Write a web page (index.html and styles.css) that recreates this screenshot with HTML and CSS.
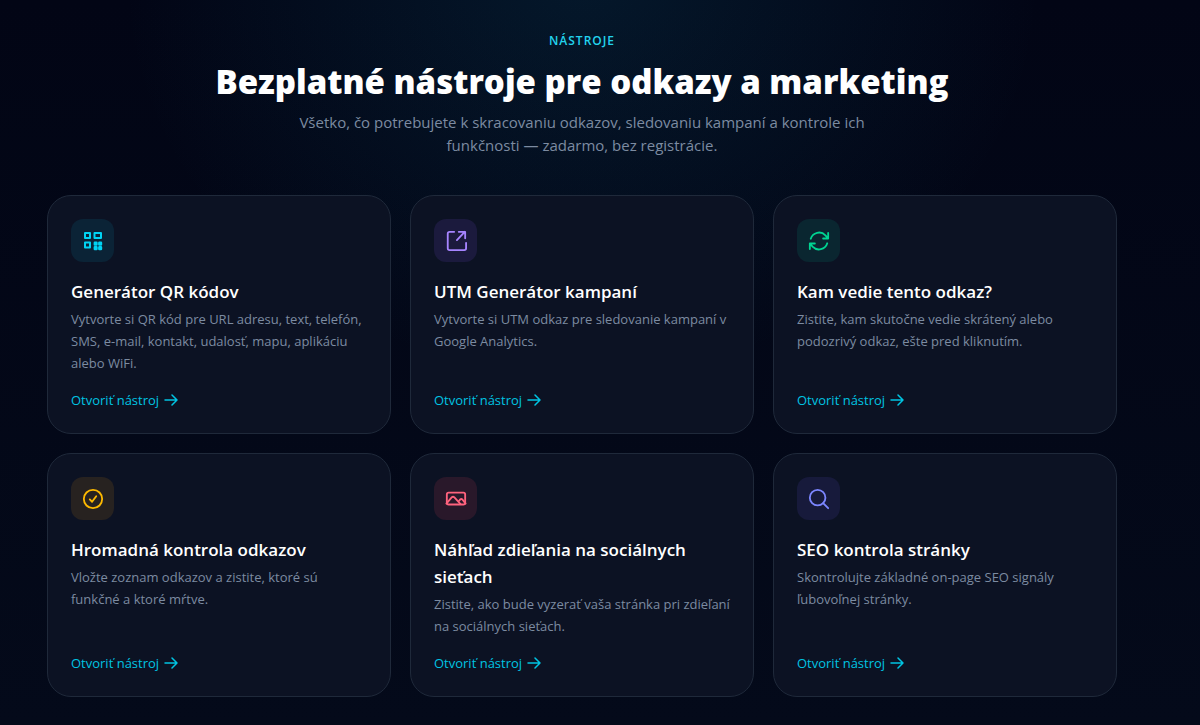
FILE: index.html
```html
<!DOCTYPE html>
<html lang="sk">
<head>
<meta charset="utf-8">
<title>Bezplatné nástroje pre odkazy a marketing</title>
<meta name="viewport" content="width=device-width, initial-scale=1">
<link rel="stylesheet" href="styles.css">
</head>
<body>
<main class="tools">
  <header class="intro">
    <p class="eyebrow">NÁSTROJE</p>
    <h1 class="heading">Bezplatné nástroje pre odkazy a marketing</h1>
    <p class="lead">Všetko, čo potrebujete k skracovaniu odkazov, sledovaniu kampaní a kontrole ich funkčnosti — zadarmo, bez registrácie.</p>
  </header>
  <div class="grid">
    <article class="card">
      <span class="badge cyan"><svg class="icon" viewBox="0 0 22 22"><path d="M3 3h5v5H3zM12.500 3h6.500v5h-6.500zM3 12.500h5v5H3z"/><path d="M12.800 12.800h1.700v1.700h-1.700zM17.300 12.800H19v1.700h-1.700zM12.800 17.300h1.700V19h-1.700zM17.300 17.300H19V19h-1.700z" stroke-width="2.400"/></svg></span>
      <h2 class="title">Generátor QR kódov</h2>
      <p class="text">Vytvorte si QR kód pre URL adresu, text, telefón, SMS, e-mail, kontakt, udalosť, mapu, aplikáciu alebo WiFi.</p>
      <a class="link" href="#qr">Otvoriť nástroj <svg class="arrow" viewBox="0 0 14 14"><path d="M1 7h12M8 2l5 5-5 5"/></svg></a>
    </article>
    <article class="card">
      <span class="badge violet"><svg class="icon" viewBox="0 0 24 24"><path d="M10 2H5a2 2 0 0 0-2 2v16a2 2 0 0 0 2 2h16a2 2 0 0 0 2-2v-6M13 11l8.500-9M15 2h7v7"/></svg></span>
      <h2 class="title">UTM Generátor kampaní</h2>
      <p class="text">Vytvorte si UTM odkaz pre sledovanie kampaní v Google Analytics.</p>
      <a class="link" href="#utm">Otvoriť nástroj <svg class="arrow" viewBox="0 0 14 14"><path d="M1 7h12M8 2l5 5-5 5"/></svg></a>
    </article>
    <article class="card">
      <span class="badge green"><svg class="icon" viewBox="0 0 24 24"><path d="M16.500 9.300h5.500v-6M7.500 14.700H2v6M3 9.500a9.500 9.500 0 0 1 16-3.700l3 3.500M21 14.500a9.500 9.500 0 0 1-16 3.700l-3-3.500"/></svg></span>
      <h2 class="title">Kam vedie tento odkaz?</h2>
      <p class="text">Zistite, kam skutočne vedie skrátený alebo podozrivý odkaz, ešte pred kliknutím.</p>
      <a class="link" href="#redirect">Otvoriť nástroj <svg class="arrow" viewBox="0 0 14 14"><path d="M1 7h12M8 2l5 5-5 5"/></svg></a>
    </article>
    <article class="card">
      <span class="badge amber"><svg class="icon" viewBox="0 0 24 24"><circle cx="12" cy="12" r="10"/><path d="M8.500 12.500l2.500 2.500 4.500-6"/></svg></span>
      <h2 class="title">Hromadná kontrola odkazov</h2>
      <p class="text">Vložte zoznam odkazov a zistite, ktoré sú funkčné a ktoré mŕtve.</p>
      <a class="link" href="#bulk">Otvoriť nástroj <svg class="arrow" viewBox="0 0 14 14"><path d="M1 7h12M8 2l5 5-5 5"/></svg></a>
    </article>
    <article class="card">
      <span class="badge rose"><svg class="icon" viewBox="0 0 24 24"><rect x="2" y="5" width="20" height="13" rx="2"/><path d="M1.500 17l6-7a2 2 0 0 1 2.500 0l7 7.500M15.500 14l1-1.500a2 2 0 0 1 2.500 0l3.500 4.500"/></svg></span>
      <h2 class="title">Náhľad zdieľania na sociálnych sieťach</h2>
      <p class="text">Zistite, ako bude vyzerať vaša stránka pri zdieľaní na sociálnych sieťach.</p>
      <a class="link" href="#preview">Otvoriť nástroj <svg class="arrow" viewBox="0 0 14 14"><path d="M1 7h12M8 2l5 5-5 5"/></svg></a>
    </article>
    <article class="card">
      <span class="badge indigo"><svg class="icon" viewBox="0 0 24 24"><circle cx="10.500" cy="10.500" r="8.500"/><path d="M16.500 16.500l5.500 5.500"/></svg></span>
      <h2 class="title">SEO kontrola stránky</h2>
      <p class="text">Skontrolujte základné on-page SEO signály ľubovoľnej stránky.</p>
      <a class="link" href="#seo">Otvoriť nástroj <svg class="arrow" viewBox="0 0 14 14"><path d="M1 7h12M8 2l5 5-5 5"/></svg></a>
    </article>
  </div>
</main>
</body>
</html>
```
FILE: styles.css
```css
* { box-sizing: border-box; }
body {
  margin: 0;
  min-height: 100vh;
  background:
    radial-gradient(ellipse 460px 400px at 582px -20px, rgba(20, 150, 190, 0.13), transparent),
    linear-gradient(#020515, #040a1a);
  color: #fff;
  font-family: "Open Sans", "Noto Sans", sans-serif;
}
.tools { padding: 32px 83px 28px 47px; }
.intro { text-align: center; margin-bottom: 38px; }
.eyebrow {
  margin: 0;
  color: #22d3ee;
  font-size: 12px;
  line-height: 18px;
  font-weight: 600;
  letter-spacing: 1px;
}
.heading {
  margin: 12px 0 9px;
  font-size: 33px;
  line-height: 40px;
  font-weight: 800;
}
.lead {
  max-width: 600px;
  margin: 0 auto;
  color: #7c8ba1;
  font-size: 15px;
  line-height: 23px;
}
.grid {
  display: grid;
  grid-template-columns: repeat(3, 1fr);
  gap: 19px;
}
.card {
  display: flex;
  flex-direction: column;
  align-items: flex-start;
  padding: 23px;
  border: 1px solid #1f293a;
  border-radius: 24px;
  background: #0c1223;
}
.badge {
  display: flex;
  align-items: center;
  justify-content: center;
  width: 43px;
  height: 43px;
  margin-bottom: 16px;
  border-radius: 12px;
}
.icon {
  width: 22px;
  height: 22px;
  fill: none;
  stroke: currentColor;
  stroke-width: 2;
  stroke-linecap: round;
  stroke-linejoin: round;
}
.cyan { color: #00d3f3; background: #0b2336; }
.violet { color: #a684ff; background: #1b1a3d; }
.green { color: #00d492; background: #0a2630; }
.amber { color: #fdb900; background: #272220; }
.rose { color: #ff637e; background: #29182a; }
.indigo { color: #7c86ff; background: #171a3b; }
.title {
  margin: 0 0 3px;
  font-size: 17px;
  line-height: 27px;
  font-weight: 600;
}
.text {
  margin: 0 0 16px;
  color: #7c8ba1;
  font-size: 13px;
  line-height: 22px;
}
.link {
  display: flex;
  align-items: center;
  gap: 5px;
  margin-top: auto;
  color: #00c4e2;
  font-size: 13px;
  line-height: 20px;
  text-decoration: none;
}
.arrow {
  width: 14px;
  height: 14px;
  fill: none;
  stroke: currentColor;
  stroke-width: 1.5;
  stroke-linecap: round;
  stroke-linejoin: round;
}
```
